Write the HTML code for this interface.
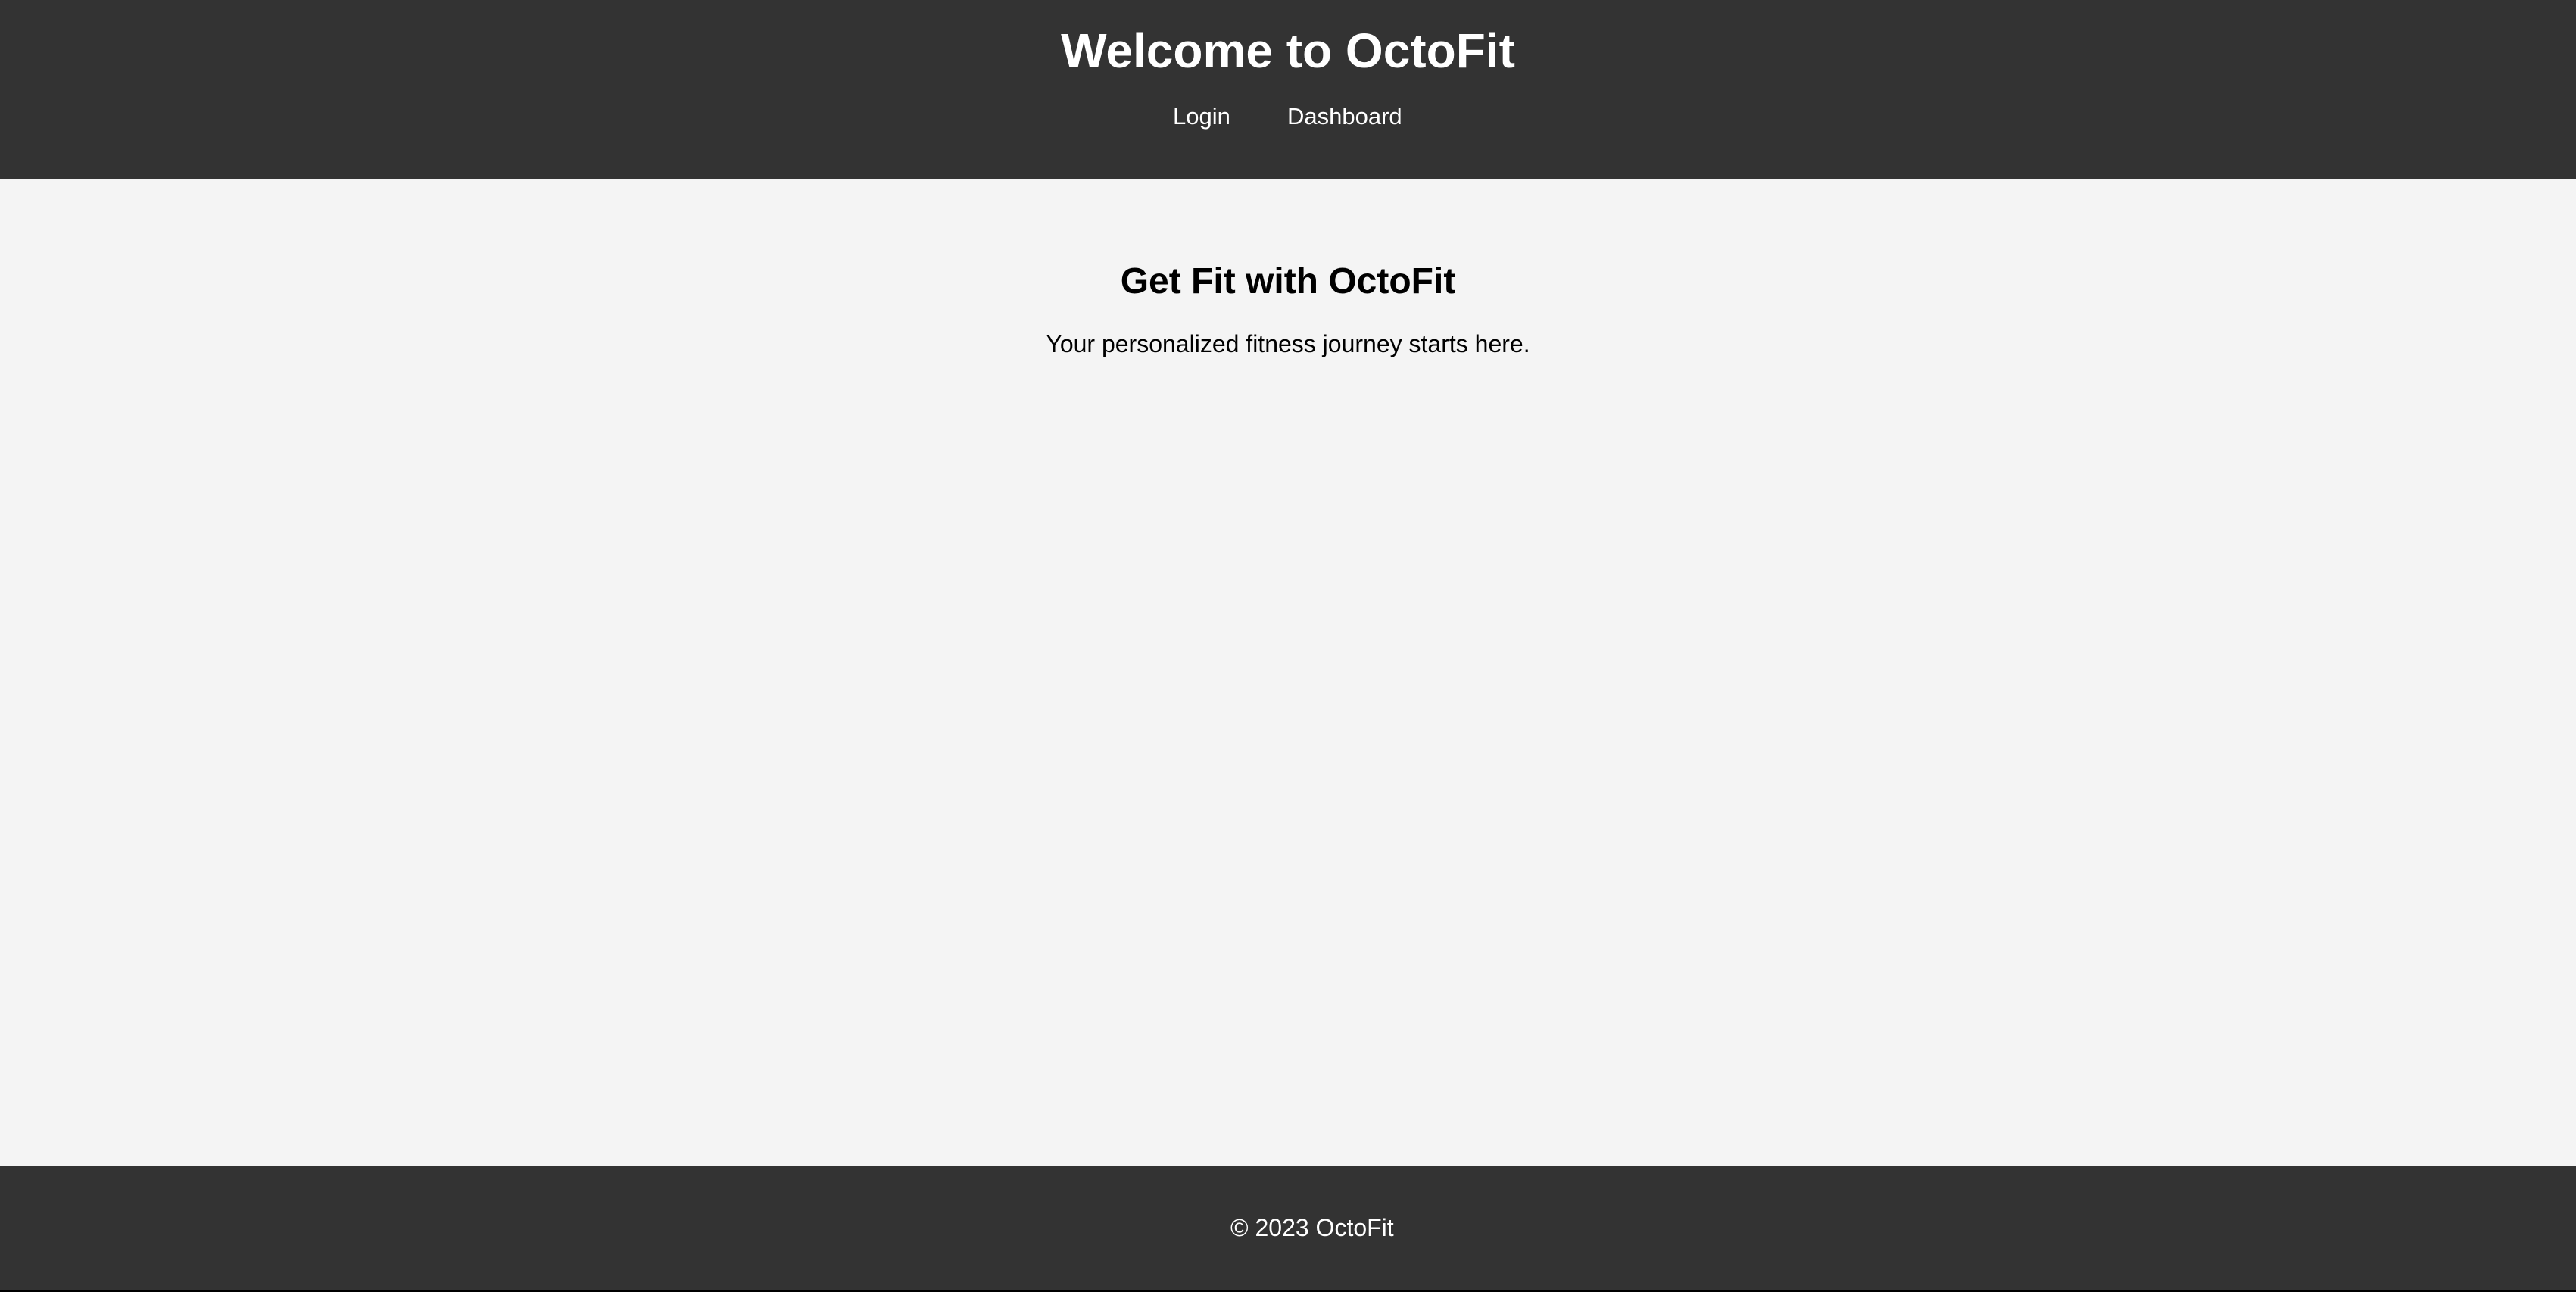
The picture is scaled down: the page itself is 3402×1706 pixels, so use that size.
<!DOCTYPE html>
<html><head><meta charset="utf-8"><style>
html,body{margin:0;padding:0}
body{width:3402px;height:1706px;background:#000;position:relative;overflow:hidden;font-family:"Liberation Sans",Arial,sans-serif}
.hdr{position:absolute;left:0;top:0;width:3402px;height:237px;background:#333}
.main{position:absolute;left:0;top:237px;width:3402px;height:1302px;background:#f4f4f4}
.ftr{position:absolute;left:0;top:1539px;width:3402px;height:164px;background:#333}
.t{position:absolute;white-space:nowrap;line-height:1}
</style></head><body>
<div class="hdr"></div>
<div class="main"></div>
<div class="ftr"></div>
<div class="t" style="left:0;width:3402px;text-align:center;top:35px;font-size:64px;font-weight:bold;color:#fff">Welcome to OctoFit</div>
<div class="t" style="left:1549px;top:138px;font-size:31px;color:#fff">Login</div>
<div class="t" style="left:1700px;top:138px;font-size:31px;color:#fff">Dashboard</div>
<div class="t" style="left:0;width:3402px;text-align:center;top:348px;font-size:48px;font-weight:bold;color:#000">Get Fit with OctoFit</div>
<div class="t" style="left:0;width:3402px;text-align:center;top:438px;font-size:32px;color:#000">Your personalized fitness journey starts here.</div>
<div class="t" style="left:1625px;top:1605px;font-size:32px;color:#fff">© 2023 OctoFit</div>
</body></html>
